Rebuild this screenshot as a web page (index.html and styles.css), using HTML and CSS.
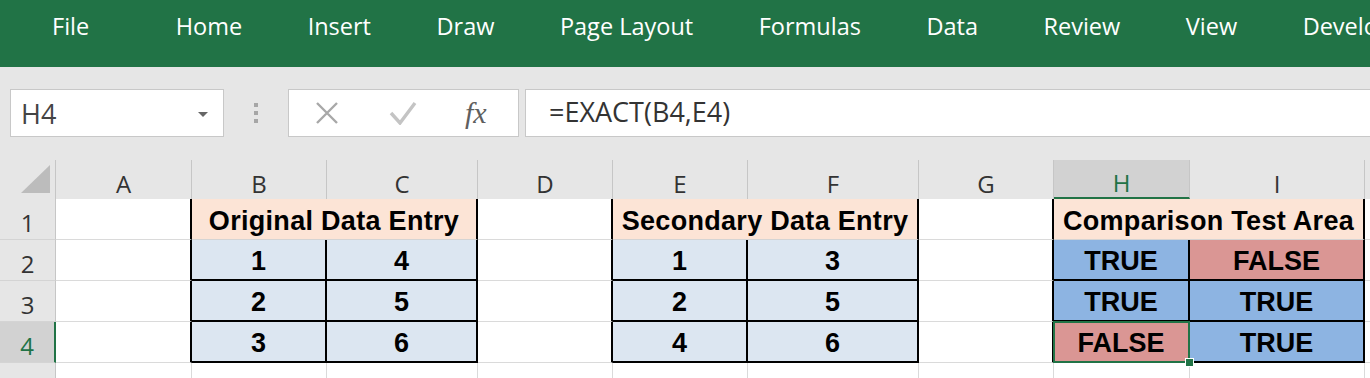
FILE: index.html
```html
<!DOCTYPE html>
<html lang="en">
<head>
  <meta charset="UTF-8">
  <title>EXACT - Excel</title>
  <link rel="stylesheet" href="styles.css">
</head>
<body>
  <div class="ribbon">
    <span class="tab file">File</span>
    <span class="tab">Home</span>
    <span class="tab">Insert</span>
    <span class="tab">Draw</span>
    <span class="tab">Page Layout</span>
    <span class="tab">Formulas</span>
    <span class="tab">Data</span>
    <span class="tab">Review</span>
    <span class="tab">View</span>
    <span class="tab">Developer</span>
  </div>

  <div class="formula-bar">
    <div class="name-box">
      <span>H4</span>
      <span class="drop-arrow"></span>
    </div>
    <div class="grip">
      <span></span><span></span><span></span>
    </div>
    <div class="fx-box">
      <svg class="icon-cancel" width="24" height="24" viewBox="0 0 24 24">
        <path d="M2 2 L22 22 M22 2 L2 22" stroke="#a8a8a8" stroke-width="2.4" fill="none"/>
      </svg>
      <svg class="icon-enter" width="28" height="24" viewBox="0 0 28 24">
        <path d="M2 12 L11 22 L26 2" stroke="#c4c4c4" stroke-width="3.4" fill="none"/>
      </svg>
      <span class="fx">fx</span>
    </div>
    <div class="formula-input">=EXACT(B4,E4)</div>
  </div>

  <div class="sheet">
    <!-- column headers -->
    <div class="corner">
      <svg width="30" height="28" viewBox="0 0 30 28"><polygon points="29,0 29,28 0,28" fill="#bcbcbc"/></svg>
    </div>
    <div class="col-head">A</div>
    <div class="col-head">B</div>
    <div class="col-head">C</div>
    <div class="col-head">D</div>
    <div class="col-head">E</div>
    <div class="col-head">F</div>
    <div class="col-head">G</div>
    <div class="col-head active">H</div>
    <div class="col-head">I</div>
    <div class="col-head"></div>

    <!-- row 1 -->
    <div class="row-head">1</div>
    <div class="cell edge"></div>
    <div class="cell title span2">Original Data Entry</div>
    <div class="cell edge"></div>
    <div class="cell title span2">Secondary Data Entry</div>
    <div class="cell edge"></div>
    <div class="cell title span2">Comparison Test Area</div>
    <div class="cell"></div>

    <!-- row 2 -->
    <div class="row-head">2</div>
    <div class="cell edge"></div>
    <div class="cell data">1</div>
    <div class="cell data">4</div>
    <div class="cell edge"></div>
    <div class="cell data">1</div>
    <div class="cell data">3</div>
    <div class="cell edge"></div>
    <div class="cell data true">TRUE</div>
    <div class="cell data false">FALSE</div>
    <div class="cell"></div>

    <!-- row 3 -->
    <div class="row-head">3</div>
    <div class="cell edge"></div>
    <div class="cell data">2</div>
    <div class="cell data">5</div>
    <div class="cell edge"></div>
    <div class="cell data">2</div>
    <div class="cell data">5</div>
    <div class="cell edge"></div>
    <div class="cell data true">TRUE</div>
    <div class="cell data true">TRUE</div>
    <div class="cell"></div>

    <!-- row 4 -->
    <div class="row-head active">4</div>
    <div class="cell edge"></div>
    <div class="cell data">3</div>
    <div class="cell data">6</div>
    <div class="cell edge"></div>
    <div class="cell data">4</div>
    <div class="cell data">6</div>
    <div class="cell edge"></div>
    <div class="cell data false selected">FALSE</div>
    <div class="cell data true">TRUE</div>
    <div class="cell"></div>

    <!-- row 5 -->
    <div class="row-head">5</div>
    <div class="cell"></div>
    <div class="cell"></div>
    <div class="cell"></div>
    <div class="cell"></div>
    <div class="cell"></div>
    <div class="cell"></div>
    <div class="cell"></div>
    <div class="cell"></div>
    <div class="cell"></div>
    <div class="cell"></div>
  </div>
</body>
</html>
```

FILE: styles.css
```css
body {
  width: 1370px;
  height: 378px;
  margin: 0;
  overflow: hidden;
  background: #e6e6e6;
  font-family: "Open Sans", "Noto Sans", sans-serif;
  color: #333;
}

/* ribbon tabs */
.ribbon {
  height: 67px;
  background: #217346;
  display: flex;
  align-items: flex-start;
  gap: 65.5px;
  padding-left: 52px;
  white-space: nowrap;
  overflow: hidden;
}

.tab {
  color: #fff;
  font-size: 23.5px;
  line-height: 32px;
  margin-top: 10px;
}

.tab.file {
  margin-right: 21px;
}

/* formula bar */
.formula-bar {
  display: flex;
  align-items: center;
  height: 48px;
  margin-top: 22px;
  padding-left: 10px;
}

.name-box {
  box-sizing: border-box;
  width: 214px;
  height: 48px;
  background: #fff;
  border: 1px solid #c8c8c8;
  display: flex;
  align-items: center;
  justify-content: space-between;
  padding: 0 15px 0 10px;
  font-size: 27px;
  color: #444;
}

.drop-arrow {
  width: 0;
  height: 0;
  border-left: 5px solid transparent;
  border-right: 5px solid transparent;
  border-top: 5px solid #666;
  margin-top: 2px;
}

.grip {
  width: 64px;
  display: flex;
  flex-direction: column;
  align-items: center;
  gap: 4px;
}

.grip span {
  width: 4px;
  height: 4px;
  background: #a6a6a6;
}

.fx-box {
  box-sizing: border-box;
  width: 231px;
  height: 48px;
  background: #fff;
  border: 1px solid #c8c8c8;
  display: flex;
  align-items: center;
  padding-left: 26px;
}

.icon-enter {
  margin-left: 50px;
}

.fx {
  margin-left: 48px;
  font-family: "Liberation Serif", serif;
  font-style: italic;
  font-size: 30px;
  color: #5f5f5f;
}

.formula-input {
  flex: 1;
  box-sizing: border-box;
  height: 48px;
  margin-left: 6px;
  background: #fff;
  border: 1px solid #c8c8c8;
  border-right: none;
  padding-left: 23px;
  font-size: 27px;
  line-height: 44px;
  color: #333;
}

/* worksheet grid */
.sheet {
  margin-top: 23px;
  display: grid;
  grid-template-columns: 56px 136px 135px 151px 135px 135px 171px 135px 136px 175px 60px;
  grid-template-rows: 39px repeat(5, 41px);
  background: #fff;
}

.sheet > div {
  box-sizing: border-box;
}

.corner {
  background: #e6e6e6;
  border-right: 1px solid #c6c6c6;
  display: flex;
  align-items: flex-end;
  justify-content: flex-end;
  padding: 0 4px 6px 0;
}

.col-head {
  background: #e6e6e6;
  border-right: 1px solid #c6c6c6;
  display: flex;
  align-items: center;
  justify-content: center;
  padding-top: 7px;
  font-size: 24px;
  color: #333;
}

.col-head.active {
  background: #d2d2d2;
  color: #217346;
  border-bottom: 2px solid #217346;
}

.row-head {
  background: #e6e6e6;
  border-right: 1px solid #c6c6c6;
  border-bottom: 1px solid #d4d4d4;
  display: flex;
  align-items: center;
  justify-content: center;
  padding-top: 6px;
  font-size: 24px;
  color: #333;
}

.row-head.active {
  background: #d2d2d2;
  color: #217346;
  border-right: 2px solid #217346;
}

.cell {
  border-right: 1px solid #dadada;
  border-bottom: 1px solid #dadada;
  display: flex;
  align-items: center;
  justify-content: center;
  padding-top: 4px;
  font-family: "Liberation Sans", Arial, sans-serif;
  font-weight: bold;
  font-size: 27px;
  color: #000;
  white-space: nowrap;
}

.cell.edge {
  border-right: 2px solid #000;
}

.cell.span2 {
  grid-column: span 2;
}

.cell.title {
  background: #fce4d6;
  border-right: 2px solid #000;
  border-bottom: 1px solid #d4d4d4;
  letter-spacing: 0.3px;
}

.cell.data {
  background: #dce6f1;
  border-right: 2px solid #000;
  border-bottom: 2px solid #000;
}

.cell.true {
  background: #8db4e2;
}

.cell.false {
  background: #da9694;
}

.cell.selected {
  position: relative;
}

.cell.selected::before {
  content: "";
  position: absolute;
  top: -1px;
  left: -1px;
  right: -2px;
  bottom: -2px;
  border: 2px solid #217346;
  z-index: 2;
}

.cell.selected::after {
  content: "";
  position: absolute;
  right: -6px;
  bottom: -6px;
  width: 7px;
  height: 7px;
  background: #217346;
  border: 1px solid #fff;
  z-index: 3;
}
```
